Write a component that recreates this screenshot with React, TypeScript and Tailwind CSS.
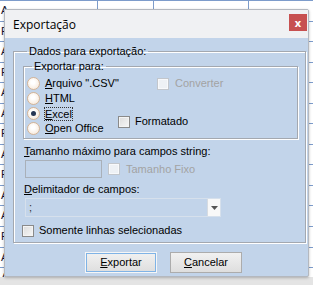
import React from "react";

const rowHeights = [
  "h-[18px]", "h-[21px]", "h-[20px]", "h-[21px]", "h-[20px]", "h-[21px]", "h-[20px]",
  "h-[21px]", "h-[20px]", "h-[21px]", "h-[20px]", "h-[21px]", "h-[21px]", "h-[20px]", "h-[20px]",
];

const leftCells = ["AMENTO CREDITO", "A", "P", "A", "P", "A", "A", "P", "A", "P", "A", "A", "P", "A", "A"];

function Radio({ checked }: { checked?: boolean }) {
  return (
    <span className="w-[13px] h-[13px] rounded-full border border-[#d4b497] bg-[radial-gradient(circle_at_45%_40%,#ffffff_20%,#f6e6d6_90%)] flex items-center justify-center shrink-0">
      {checked && <span className="w-[5px] h-[5px] rounded-full bg-[#263654]" />}
    </span>
  );
}

function Check({ disabled }: { disabled?: boolean }) {
  return (
    <span
      className={`w-[12px] h-[12px] border shrink-0 ${
        disabled
          ? "border-[#c2c6cc] bg-[#eef1f5] shadow-[inset_0_0_0_1px_#f8f9fb]"
          : "border-[#8a8a8a] bg-[linear-gradient(135deg,#dcdcdc,#f7f7f7)] shadow-[inset_0_0_0_1px_#f4f4f4]"
      }`}
    />
  );
}

function U({ children }: { children: React.ReactNode }) {
  return <span className="underline underline-offset-[1px]">{children}</span>;
}

export default function App() {
  return (
    <div className="relative w-[313px] h-[285px] overflow-hidden bg-white font-['Liberation_Sans',Arial,sans-serif] text-[11px] text-black">
      {/* grid behind the dialog */}
      <div className="absolute left-0 top-[-17px] w-[313px]">
        {rowHeights.map((h, i) => (
          <div key={i} className={`${h} flex border-b border-[#7d9ccb] text-[#101030]`}>
            <div className="w-[98px] border-r border-[#7d9ccb] pl-[1px] leading-[18px] whitespace-nowrap overflow-hidden">
              {leftCells[i]}
            </div>
            <div className="w-[56px] border-r border-[#7d9ccb] pl-[14px] leading-[18px] whitespace-nowrap overflow-hidden">
              {i === 0 ? "P.I. 713" : ""}
            </div>
            <div className="w-[95px] border-r border-[#7d9ccb] pl-[10px] leading-[18px] whitespace-nowrap overflow-hidden">
              {i === 0 ? "AXLESOT" : ""}
            </div>
            <div className="flex-1 pl-[6px] leading-[18px] whitespace-nowrap overflow-hidden">
              {i === 0 ? "R$ 40,00" : ""}
            </div>
          </div>
        ))}
      </div>
      <div className="absolute left-0 bottom-0 w-full h-[8px] bg-[#e4e4e4]" />

      {/* dialog */}
      <div className="absolute left-[4px] top-[9px] w-[305px] h-[268px] border border-[#b4b8bf] rounded-[2px] bg-[#c2d4ea] shadow-[0_1px_3px_rgba(0,0,0,0.25)] flex flex-col">
        <div className="h-[28px] bg-[#f0f1f3] flex items-center pl-[8px] pr-[1px] font-['Open_Sans',Arial,sans-serif] text-[12px]">
          <span className="mb-[-1px]">Exportação</span>
          <span className="ml-auto mt-[-3px] w-[18px] h-[17px] bg-[#c75050] text-white text-[11px] font-bold flex items-center justify-center leading-none">
            x
          </span>
        </div>

        <div className="flex-1 pl-[8px] pt-[6px] flex flex-col">
          <fieldset className="w-[293px] border border-[#a3a8b0] shadow-[inset_1px_1px_0_#fff,1px_1px_0_#fff] pl-[9px] pr-[7px] pb-[5px]">
            <legend className="ml-[4px] px-[2px] leading-[14px] whitespace-nowrap">Dados para exportação:</legend>

            <fieldset className="mt-[1px] w-[275px] border border-[#a3a8b0] shadow-[inset_1px_1px_0_#fff,1px_1px_0_#fff] pl-[3px] pt-[3px] pb-[2px]">
              <legend className="ml-[5px] px-[2px] leading-[14px] whitespace-nowrap">Exportar para:</legend>
              <div className="flex whitespace-nowrap">
                <div className="w-[91px] flex flex-col">
                  <div className="h-[15px] flex items-center gap-[5px]">
                    <Radio />
                    <span>
                      <U>A</U>rquivo ".CSV"
                    </span>
                  </div>
                  <div className="h-[15px] flex items-center gap-[5px]">
                    <Radio />
                    <span>
                      <U>H</U>TML
                    </span>
                  </div>
                  <div className="h-[15px] flex items-center gap-[5px]">
                    <Radio checked />
                    <span className="outline outline-1 outline-dotted outline-[#333] leading-[12px]">
                      <U>E</U>xcel
                    </span>
                  </div>
                  <div className="h-[15px] flex items-center gap-[5px]">
                    <Radio />
                    <span>
                      <U>O</U>pen Office
                    </span>
                  </div>
                </div>
                <div className="flex-1 flex flex-col">
                  <div className="h-[15px] flex items-center gap-[6px] ml-[39px] text-[#a3a3a3]">
                    <Check disabled />
                    <span>Converter</span>
                  </div>
                  <div className="h-[23px]" />
                  <div className="h-[15px] flex items-center gap-[5px]">
                    <Check />
                    <span>Formatado</span>
                  </div>
                </div>
              </div>
            </fieldset>

            <div className="mt-[6px] ml-[1px] leading-[13px]">
              <U>T</U>amanho máximo para campos string:
            </div>
            <div className="mt-[2px] ml-[2px] flex items-center gap-[6px]">
              <div className="w-[77px] h-[18px] border border-[#a9b0b9]" />
              <Check disabled />
              <span className="text-[#a3a3a3]">Tamanho Fixo</span>
            </div>
            <div className="mt-[5px] ml-[1px] leading-[13px]">
              <U>D</U>elimitador de campos:
            </div>
            <div className="mt-[2px] ml-[2px] w-[196px] h-[19px] border border-[#d6e0ec] flex items-center">
              <span className="pl-[3px] text-[#333]">;</span>
              <span className="ml-auto w-[13px] h-full bg-[#f8f8f8] border-l border-[#d6dbe1] flex items-center justify-center">
                <svg width="7" height="4" viewBox="0 0 7 4">
                  <path d="M0 0h7L3.5 4z" fill="#555" />
                </svg>
              </span>
            </div>
            <div className="mt-[7px] h-[13px] flex items-center gap-[5px] ml-[-1px]">
              <Check />
              <span>Somente linhas selecionadas</span>
            </div>
          </fieldset>

          <div className="mt-[9px] flex justify-center gap-[13px] pl-[6px]">
            <button className="w-[72px] h-[21px] border border-[#f6f6f6] shadow-[inset_0_0_0_1px_#7fb3e6] bg-[linear-gradient(#f1f1f1,#dedede)] text-[11px] leading-none">
              <U>E</U>xportar
            </button>
            <button className="w-[72px] h-[21px] border border-[#acacac] bg-[linear-gradient(#f1f1f1,#dedede)] text-[11px] leading-none">
              <U>C</U>ancelar
            </button>
          </div>
        </div>
      </div>
    </div>
  );
}
